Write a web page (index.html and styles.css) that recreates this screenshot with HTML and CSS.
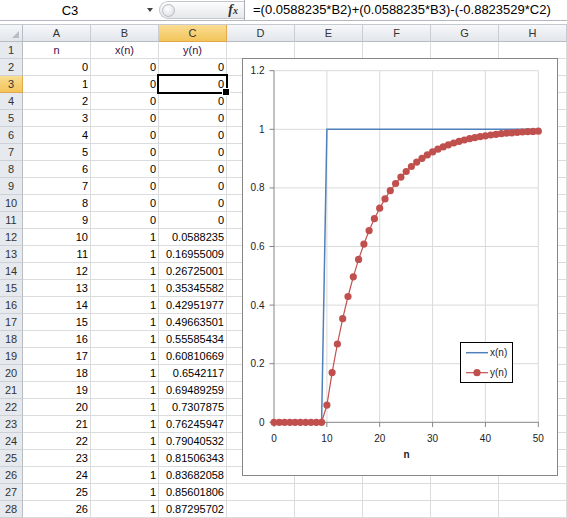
FILE: index.html
```html
<!DOCTYPE html>
<html>
<head>
<meta charset="utf-8">
<title>Sheet</title>
<link rel="stylesheet" href="styles.css">
</head>
<body>
<div class="fbar">
  <div class="namebox">C3</div>
  <div class="dd"><span class="tri"></span></div>
  <div class="pill"><span class="knob"></span><span class="fx">f<span class="fxs">x</span></span></div>
  <div class="formula">=(0.0588235*B2)+(0.0588235*B3)-(-0.8823529*C2)</div>
</div>
<div class="gap"></div>
<div class="sheet">
  <div class="corner"><span class="ctri"></span></div><div class="ch">A</div><div class="ch">B</div><div class="ch on">C</div><div class="ch">D</div><div class="ch">E</div><div class="ch">F</div><div class="ch">G</div><div class="ch">H</div>
  <div class="rh">1</div><div class="c lbl">n</div><div class="c lbl">x(n)</div><div class="c lbl">y(n)</div><div class="c"></div><div class="c"></div><div class="c"></div><div class="c"></div><div class="c"></div>
  <div class="rh">2</div><div class="c num">0</div><div class="c num">0</div><div class="c num">0</div><div class="c"></div><div class="c"></div><div class="c"></div><div class="c"></div><div class="c"></div>
  <div class="rh on">3</div><div class="c num">1</div><div class="c num">0</div><div class="c num">0</div><div class="c"></div><div class="c"></div><div class="c"></div><div class="c"></div><div class="c"></div>
  <div class="rh">4</div><div class="c num">2</div><div class="c num">0</div><div class="c num">0</div><div class="c"></div><div class="c"></div><div class="c"></div><div class="c"></div><div class="c"></div>
  <div class="rh">5</div><div class="c num">3</div><div class="c num">0</div><div class="c num">0</div><div class="c"></div><div class="c"></div><div class="c"></div><div class="c"></div><div class="c"></div>
  <div class="rh">6</div><div class="c num">4</div><div class="c num">0</div><div class="c num">0</div><div class="c"></div><div class="c"></div><div class="c"></div><div class="c"></div><div class="c"></div>
  <div class="rh">7</div><div class="c num">5</div><div class="c num">0</div><div class="c num">0</div><div class="c"></div><div class="c"></div><div class="c"></div><div class="c"></div><div class="c"></div>
  <div class="rh">8</div><div class="c num">6</div><div class="c num">0</div><div class="c num">0</div><div class="c"></div><div class="c"></div><div class="c"></div><div class="c"></div><div class="c"></div>
  <div class="rh">9</div><div class="c num">7</div><div class="c num">0</div><div class="c num">0</div><div class="c"></div><div class="c"></div><div class="c"></div><div class="c"></div><div class="c"></div>
  <div class="rh">10</div><div class="c num">8</div><div class="c num">0</div><div class="c num">0</div><div class="c"></div><div class="c"></div><div class="c"></div><div class="c"></div><div class="c"></div>
  <div class="rh">11</div><div class="c num">9</div><div class="c num">0</div><div class="c num">0</div><div class="c"></div><div class="c"></div><div class="c"></div><div class="c"></div><div class="c"></div>
  <div class="rh">12</div><div class="c num">10</div><div class="c num">1</div><div class="c num">0.0588235</div><div class="c"></div><div class="c"></div><div class="c"></div><div class="c"></div><div class="c"></div>
  <div class="rh">13</div><div class="c num">11</div><div class="c num">1</div><div class="c num">0.16955009</div><div class="c"></div><div class="c"></div><div class="c"></div><div class="c"></div><div class="c"></div>
  <div class="rh">14</div><div class="c num">12</div><div class="c num">1</div><div class="c num">0.26725001</div><div class="c"></div><div class="c"></div><div class="c"></div><div class="c"></div><div class="c"></div>
  <div class="rh">15</div><div class="c num">13</div><div class="c num">1</div><div class="c num">0.35345582</div><div class="c"></div><div class="c"></div><div class="c"></div><div class="c"></div><div class="c"></div>
  <div class="rh">16</div><div class="c num">14</div><div class="c num">1</div><div class="c num">0.42951977</div><div class="c"></div><div class="c"></div><div class="c"></div><div class="c"></div><div class="c"></div>
  <div class="rh">17</div><div class="c num">15</div><div class="c num">1</div><div class="c num">0.49663501</div><div class="c"></div><div class="c"></div><div class="c"></div><div class="c"></div><div class="c"></div>
  <div class="rh">18</div><div class="c num">16</div><div class="c num">1</div><div class="c num">0.55585434</div><div class="c"></div><div class="c"></div><div class="c"></div><div class="c"></div><div class="c"></div>
  <div class="rh">19</div><div class="c num">17</div><div class="c num">1</div><div class="c num">0.60810669</div><div class="c"></div><div class="c"></div><div class="c"></div><div class="c"></div><div class="c"></div>
  <div class="rh">20</div><div class="c num">18</div><div class="c num">1</div><div class="c num">0.6542117</div><div class="c"></div><div class="c"></div><div class="c"></div><div class="c"></div><div class="c"></div>
  <div class="rh">21</div><div class="c num">19</div><div class="c num">1</div><div class="c num">0.69489259</div><div class="c"></div><div class="c"></div><div class="c"></div><div class="c"></div><div class="c"></div>
  <div class="rh">22</div><div class="c num">20</div><div class="c num">1</div><div class="c num">0.7307875</div><div class="c"></div><div class="c"></div><div class="c"></div><div class="c"></div><div class="c"></div>
  <div class="rh">23</div><div class="c num">21</div><div class="c num">1</div><div class="c num">0.76245947</div><div class="c"></div><div class="c"></div><div class="c"></div><div class="c"></div><div class="c"></div>
  <div class="rh">24</div><div class="c num">22</div><div class="c num">1</div><div class="c num">0.79040532</div><div class="c"></div><div class="c"></div><div class="c"></div><div class="c"></div><div class="c"></div>
  <div class="rh">25</div><div class="c num">23</div><div class="c num">1</div><div class="c num">0.81506343</div><div class="c"></div><div class="c"></div><div class="c"></div><div class="c"></div><div class="c"></div>
  <div class="rh">26</div><div class="c num">24</div><div class="c num">1</div><div class="c num">0.83682058</div><div class="c"></div><div class="c"></div><div class="c"></div><div class="c"></div><div class="c"></div>
  <div class="rh">27</div><div class="c num">25</div><div class="c num">1</div><div class="c num">0.85601806</div><div class="c"></div><div class="c"></div><div class="c"></div><div class="c"></div><div class="c"></div>
  <div class="rh">28</div><div class="c num">26</div><div class="c num">1</div><div class="c num">0.87295702</div><div class="c"></div><div class="c"></div><div class="c"></div><div class="c"></div><div class="c"></div>
</div>

<div class="selection"><span class="handle"></span></div>

<div class="chart">
<svg class="plot" width="314" height="416" viewBox="243 59 314 416" xmlns="http://www.w3.org/2000/svg">
  <g class="grid">
    <line x1="274" y1="363.7" x2="538.3" y2="363.7"/>
    <line x1="274" y1="305.1" x2="538.3" y2="305.1"/>
    <line x1="274" y1="246.5" x2="538.3" y2="246.5"/>
    <line x1="274" y1="187.9" x2="538.3" y2="187.9"/>
    <line x1="274" y1="129.3" x2="538.3" y2="129.3"/>
    <line x1="274" y1="70.7" x2="538.3" y2="70.7"/>
    <line x1="326.9" y1="70.7" x2="326.9" y2="422.3"/>
    <line x1="379.7" y1="70.7" x2="379.7" y2="422.3"/>
    <line x1="432.6" y1="70.7" x2="432.6" y2="422.3"/>
    <line x1="485.4" y1="70.7" x2="485.4" y2="422.3"/>
    <line x1="538.3" y1="70.7" x2="538.3" y2="422.3"/>
  </g>
  <g class="axis">
    <line x1="274" y1="70.7" x2="274" y2="422.8"/>
    <line x1="273.5" y1="422.3" x2="538.8" y2="422.3"/>
    <line x1="269.5" y1="422.3" x2="274" y2="422.3"/>
    <line x1="269.5" y1="363.7" x2="274" y2="363.7"/>
    <line x1="269.5" y1="305.1" x2="274" y2="305.1"/>
    <line x1="269.5" y1="246.5" x2="274" y2="246.5"/>
    <line x1="269.5" y1="187.9" x2="274" y2="187.9"/>
    <line x1="269.5" y1="129.3" x2="274" y2="129.3"/>
    <line x1="269.5" y1="70.7" x2="274" y2="70.7"/>
    <line x1="274" y1="422.3" x2="274" y2="427"/>
    <line x1="326.9" y1="422.3" x2="326.9" y2="427"/>
    <line x1="379.7" y1="422.3" x2="379.7" y2="427"/>
    <line x1="432.6" y1="422.3" x2="432.6" y2="427"/>
    <line x1="485.4" y1="422.3" x2="485.4" y2="427"/>
    <line x1="538.3" y1="422.3" x2="538.3" y2="427"/>
  </g>
  <g class="ylab">
    <text x="264.5" y="425.8">0</text>
    <text x="264.5" y="367.2">0.2</text>
    <text x="264.5" y="308.6">0.4</text>
    <text x="264.5" y="250">0.6</text>
    <text x="264.5" y="191.4">0.8</text>
    <text x="264.5" y="132.8">1</text>
    <text x="264.5" y="74.2">1.2</text>
  </g>
  <g class="xlab">
    <text x="274" y="441.5">0</text>
    <text x="326.9" y="441.5">10</text>
    <text x="379.7" y="441.5">20</text>
    <text x="432.6" y="441.5">30</text>
    <text x="485.4" y="441.5">40</text>
    <text x="538.3" y="441.5">50</text>
  </g>
  <text class="xtitle" x="406.5" y="458">n</text>

  <polyline class="sx" points="274,422.3 321.6,422.3 326.9,129.3 538.3,129.3"/>

  <polyline class="sy" points="274,422.3 321.6,422.3 326.9,405.1 332.1,372.6 337.4,344.0 342.7,318.7 348.0,296.5 353.3,276.8 358.6,259.4 363.9,244.1 369.1,230.6 374.4,218.7 379.7,208.2 385.0,198.9 390.3,190.7 395.6,183.5 400.9,177.1 406.2,171.5 411.4,166.5 416.7,162.1 422.0,158.3 427.3,154.9 432.6,151.9 437.9,149.2 443.2,146.9 448.4,144.8 453.7,143.0 459.0,141.4 464.3,140.0 469.6,138.7 474.9,137.6 480.2,136.6 485.4,135.8 490.7,135.0 496.0,134.3 501.3,133.7 506.6,133.2 511.9,132.8 517.2,132.3 522.4,132.0 527.7,131.7 533.0,131.4 538.3,131.2"/>
  <g class="mk">
    <circle cx="274.0" cy="422.3" r="3.6"/>
    <circle cx="279.3" cy="422.3" r="3.6"/>
    <circle cx="284.6" cy="422.3" r="3.6"/>
    <circle cx="289.9" cy="422.3" r="3.6"/>
    <circle cx="295.1" cy="422.3" r="3.6"/>
    <circle cx="300.4" cy="422.3" r="3.6"/>
    <circle cx="305.7" cy="422.3" r="3.6"/>
    <circle cx="311.0" cy="422.3" r="3.6"/>
    <circle cx="316.3" cy="422.3" r="3.6"/>
    <circle cx="321.6" cy="422.3" r="3.6"/>
    <circle cx="326.9" cy="405.1" r="3.6"/>
    <circle cx="332.1" cy="372.6" r="3.6"/>
    <circle cx="337.4" cy="344.0" r="3.6"/>
    <circle cx="342.7" cy="318.7" r="3.6"/>
    <circle cx="348.0" cy="296.5" r="3.6"/>
    <circle cx="353.3" cy="276.8" r="3.6"/>
    <circle cx="358.6" cy="259.4" r="3.6"/>
    <circle cx="363.9" cy="244.1" r="3.6"/>
    <circle cx="369.1" cy="230.6" r="3.6"/>
    <circle cx="374.4" cy="218.7" r="3.6"/>
    <circle cx="379.7" cy="208.2" r="3.6"/>
    <circle cx="385.0" cy="198.9" r="3.6"/>
    <circle cx="390.3" cy="190.7" r="3.6"/>
    <circle cx="395.6" cy="183.5" r="3.6"/>
    <circle cx="400.9" cy="177.1" r="3.6"/>
    <circle cx="406.2" cy="171.5" r="3.6"/>
    <circle cx="411.4" cy="166.5" r="3.6"/>
    <circle cx="416.7" cy="162.1" r="3.6"/>
    <circle cx="422.0" cy="158.3" r="3.6"/>
    <circle cx="427.3" cy="154.9" r="3.6"/>
    <circle cx="432.6" cy="151.9" r="3.6"/>
    <circle cx="437.9" cy="149.2" r="3.6"/>
    <circle cx="443.2" cy="146.9" r="3.6"/>
    <circle cx="448.4" cy="144.8" r="3.6"/>
    <circle cx="453.7" cy="143.0" r="3.6"/>
    <circle cx="459.0" cy="141.4" r="3.6"/>
    <circle cx="464.3" cy="140.0" r="3.6"/>
    <circle cx="469.6" cy="138.7" r="3.6"/>
    <circle cx="474.9" cy="137.6" r="3.6"/>
    <circle cx="480.2" cy="136.6" r="3.6"/>
    <circle cx="485.4" cy="135.8" r="3.6"/>
    <circle cx="490.7" cy="135.0" r="3.6"/>
    <circle cx="496.0" cy="134.3" r="3.6"/>
    <circle cx="501.3" cy="133.7" r="3.6"/>
    <circle cx="506.6" cy="133.2" r="3.6"/>
    <circle cx="511.9" cy="132.8" r="3.6"/>
    <circle cx="517.2" cy="132.3" r="3.6"/>
    <circle cx="522.4" cy="132.0" r="3.6"/>
    <circle cx="527.7" cy="131.7" r="3.6"/>
    <circle cx="533.0" cy="131.4" r="3.6"/>
    <circle cx="538.3" cy="131.2" r="3.6"/>
  </g>

  <g class="legend">
    <rect x="460.5" y="342.5" width="52" height="40"/>
    <line class="lx" x1="466" y1="352.7" x2="488" y2="352.7"/>
    <text x="490" y="356.2">x(n)</text>
    <line class="ly" x1="466" y1="372.7" x2="488" y2="372.7"/>
    <circle class="lm" cx="477" cy="372.7" r="3.6"/>
    <text x="490" y="376.2">y(n)</text>
  </g>
</svg>
</div>
</body>
</html>
```

FILE: styles.css
```css
html, body {
  margin: 0;
  padding: 0;
}
body {
  width: 567px;
  height: 518px;
  overflow: hidden;
  position: relative;
  background: #fff;
  font-family: "Liberation Sans", Arial, sans-serif;
  color: #000;
}

/* formula bar */
.fbar {
  display: flex;
  height: 21px;
  box-sizing: border-box;
  border-bottom: 1px solid #b4b8be;
  background: #fff;
}
.namebox {
  width: 140px;
  display: flex;
  align-items: center;
  justify-content: center;
  font-size: 13px;
}
.dd {
  width: 19px;
  display: flex;
  align-items: center;
  justify-content: center;
}
.tri {
  width: 0;
  height: 0;
  border-left: 3.5px solid transparent;
  border-right: 3.5px solid transparent;
  border-top: 4px solid #444;
}
.pill {
  width: 85px;
  height: 18px;
  margin-top: 1px;
  box-sizing: border-box;
  border: 1px solid #c3c6cb;
  border-right: none;
  border-radius: 10px 0 0 10px;
  background: linear-gradient(#fdfdfd, #e6e8eb);
  display: flex;
  align-items: center;
  justify-content: space-between;
  padding: 0 6px 0 2px;
}
.knob {
  width: 13px;
  height: 13px;
  box-sizing: border-box;
  border-radius: 50%;
  border: 1px solid #b8bbc0;
  background: radial-gradient(circle at 40% 35%, #ffffff, #d6d9de);
}
.fx {
  font-family: "Liberation Serif", "Times New Roman", serif;
  font-style: italic;
  font-weight: bold;
  font-size: 14px;
  color: #333;
  line-height: 1;
}
.fxs {
  font-size: 10px;
}
.formula {
  flex: 1;
  border-left: 1px solid #a9adb3;
  padding-left: 8px;
  font-size: 13px;
  line-height: 20px;
  white-space: nowrap;
  overflow: hidden;
}
.gap {
  height: 3px;
  border-bottom: 1px solid #c6cad0;
  background: #fff;
}

/* sheet */
.sheet {
  display: grid;
  grid-template-columns: 23px repeat(8, 68px);
  grid-auto-rows: 17px;
  font-size: 11px;
  line-height: 16px;
}
.sheet > div {
  box-sizing: border-box;
  white-space: nowrap;
  overflow: hidden;
}
.c {
  border-right: 1px solid #dadcdd;
  border-bottom: 1px solid #dadcdd;
}
.num {
  text-align: right;
  padding-right: 2px;
}
.lbl {
  text-align: center;
  color: #3c0f4a;
}
.corner {
  background: linear-gradient(#f4f6f8, #e2e6eb);
  border-right: 1px solid #b8bdc4;
  border-bottom: 1px solid #b8bdc4;
  position: relative;
}
.ctri {
  position: absolute;
  right: 3px;
  bottom: 3px;
  width: 0;
  height: 0;
  border-left: 7px solid transparent;
  border-bottom: 7px solid #b9bdc3;
}
.ch {
  background: linear-gradient(#f6f7f9, #e2e6eb);
  border-right: 1px solid #c9cdd3;
  border-bottom: 1px solid #b8bdc4;
  text-align: center;
  color: #333;
}
.rh {
  background: #e6e9ed;
  border-right: 1px solid #b8bdc4;
  border-bottom: 1px solid #cdd1d6;
  text-align: center;
  color: #333;
}
.ch.on, .rh.on {
  background: linear-gradient(#f9dd93, #f3c45a);
  border-right-color: #e1a94c;
  border-bottom-color: #e1a94c;
  color: #333;
}

/* active cell */
.selection {
  position: absolute;
  left: 157px;
  top: 74px;
  width: 71px;
  height: 20px;
  box-sizing: border-box;
  border: 2px solid #000;
}
.handle {
  position: absolute;
  right: -4px;
  bottom: -4px;
  width: 6px;
  height: 6px;
  background: #000;
  border: 1px solid #fff;
}

/* chart */
.chart {
  position: absolute;
  left: 242px;
  top: 58px;
  width: 316px;
  height: 418px;
  box-sizing: border-box;
  border: 1px solid #868686;
  background: #fff;
}
.plot {
  display: block;
  font-family: "Liberation Sans", Arial, sans-serif;
  font-size: 10px;
}
.grid line {
  stroke: #d9d9d9;
  stroke-width: 1;
}
.axis line {
  stroke: #868686;
  stroke-width: 1;
}
.ylab text {
  text-anchor: end;
  fill: #222;
}
.xlab text {
  text-anchor: middle;
  fill: #222;
}
.xtitle {
  text-anchor: middle;
  font-weight: bold;
  fill: #222;
}
.sx {
  fill: none;
  stroke: #4f81bd;
  stroke-width: 1.5;
}
.sy {
  fill: none;
  stroke: #c0504d;
  stroke-width: 1.2;
}
.mk circle, .lm {
  fill: #c0504d;
}
.legend rect {
  fill: #fff;
  stroke: #000;
  stroke-width: 1;
}
.legend .lx {
  stroke: #4f81bd;
  stroke-width: 1.5;
}
.legend .ly {
  stroke: #c0504d;
  stroke-width: 1.2;
}
.legend text {
  fill: #222;
}
```
